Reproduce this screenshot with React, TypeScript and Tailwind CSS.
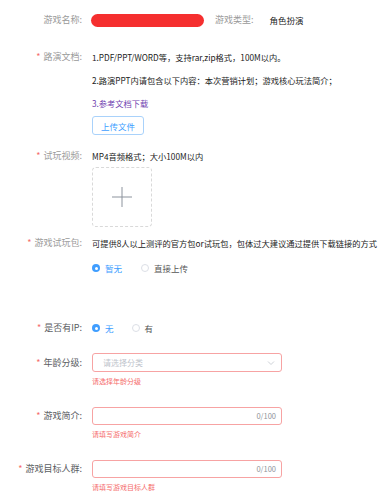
import React from "react";

const font = { fontFamily: '"Noto Sans CJK SC", "Noto Sans", sans-serif' };

function Label({ text, star, dark }: { text: string; star?: boolean; dark?: boolean }) {
  return (
    <div className={`w-[92px] shrink-0 pr-[10px] text-right text-[9px] leading-[14px] ${dark ? "text-[#5a5c61]" : "text-[#9a9a9a]"}`}>
      {star && <span className="mr-[3px] text-[#f56c6c]">*</span>}
      {text}
    </div>
  );
}

function Radio({ checked, label }: { checked?: boolean; label: string }) {
  return (
    <div className="flex items-center">
      {checked ? (
        <span className="flex h-[8px] w-[8px] items-center justify-center rounded-full bg-[#409eff]">
          <span className="h-[3px] w-[3px] rounded-full bg-white" />
        </span>
      ) : (
        <span className="h-[8px] w-[8px] rounded-full border border-[#dcdfe6] bg-white" />
      )}
      <span className={`ml-[5px] text-[8.5px] leading-[14px] ${checked ? "text-[#409eff]" : "text-[#555]"}`}>{label}</span>
    </div>
  );
}

export default function App() {
  return (
    <div className="h-[497px] w-[391px] overflow-hidden bg-white pt-[13px]" style={font}>
      {/* Row 1 */}
      <div className="flex items-center">
        <Label text="游戏名称:" />
        <div className="h-[13px] w-[113px] -ml-[1px] rounded-full bg-[#f52f2f]" />
        <div className="ml-[11px] text-[9px] leading-[14px] text-[#9a9a9a]">游戏类型:</div>
        <div className="ml-[16px] text-[8.5px] leading-[14px] text-[#222]">角色扮演</div>
      </div>

      {/* Row 2 */}
      <div className="mt-[23px] flex">
        <Label text="路演文档:" star />
        <div className="flex flex-col text-[8.25px] leading-[14px] text-[#222]">
          <div>1.PDF/PPT/WORD等，支持rar,zip格式，100M以内。</div>
          <div className="mt-[9px]">2.路演PPT内请包含以下内容：本次营销计划；游戏核心玩法简介；</div>
          <div className="mt-[9px] text-[#6f42b0]">3.参考文档下载</div>
          <div className="mt-[6px] flex h-[19px] w-[52px] items-center justify-center rounded-[3px] border border-[#a9d2fb] bg-white text-[8.5px] text-[#409eff]">
            上传文件
          </div>
        </div>
      </div>

      {/* Row 3 */}
      <div className="mt-[14px] flex">
        <Label text="试玩视频:" star />
        <div className="flex flex-col">
          <div className="text-[8.25px] leading-[14px] text-[#222]">MP4音频格式；大小100M以内</div>
          <div className="mt-[4px] flex h-[60px] w-[60px] items-center justify-center rounded-[4px] border border-dashed border-[#d9d9d9]">
            <svg width="20" height="20" viewBox="0 0 20 20">
              <path d="M10 0V20M0 10H20" stroke="#8c939d" strokeWidth="1" />
            </svg>
          </div>
        </div>
      </div>

      {/* Row 4 */}
      <div className="mt-[9px] flex">
        <Label text="游戏试玩包:" star />
        <div className="flex flex-col">
          <div className="whitespace-nowrap text-[8.25px] leading-[14px] text-[#222]">
            可提供8人以上测评的官方包or试玩包，包体过大建议通过提供下载链接的方式
          </div>
          <div className="mt-[11px] flex items-center">
            <Radio checked label="暂无" />
            <div className="ml-[19px]">
              <Radio label="直接上传" />
            </div>
          </div>
        </div>
      </div>

      {/* Row 5 */}
      <div className="mt-[46px] flex items-center">
        <Label text="是否有IP:" star dark />
        <Radio checked label="无" />
        <div className="ml-[18px]">
          <Radio label="有" />
        </div>
      </div>

      {/* Row 6 */}
      <div className="mt-[18px] flex">
        <div className="flex h-[19px] items-center">
          <Label text="年龄分级:" star dark />
        </div>
        <div className="flex flex-col">
          <div className="flex h-[19px] w-[190px] items-center justify-between rounded-[3px] border border-[#f7a3a3] pl-[10px] pr-[6px]">
            <span className="text-[8px] text-[#c0c4cc]">请选择分类</span>
            <svg width="8" height="8" viewBox="0 0 8 8">
              <path d="M1 2.5L4 5.5L7 2.5" stroke="#c0c4cc" strokeWidth="0.8" fill="none" />
            </svg>
          </div>
          <div className="mt-[2px] text-[7px] leading-[14px] text-[#f56c6c]">请选择年龄分级</div>
        </div>
      </div>

      {/* Row 7 */}
      <div className="mt-[19px] flex">
        <div className="flex h-[18px] items-center">
          <Label text="游戏简介:" star dark />
        </div>
        <div className="flex flex-col">
          <div className="flex h-[18px] w-[190px] items-center justify-end rounded-[3px] border border-[#f7a3a3] pr-[5px]">
            <span className="text-[7.5px] text-[#909399]">0/100</span>
          </div>
          <div className="mt-[2px] text-[7px] leading-[14px] text-[#f56c6c]">请填写游戏简介</div>
        </div>
      </div>

      {/* Row 8 */}
      <div className="mt-[19px] flex">
        <div className="flex h-[18px] items-center">
          <Label text="游戏目标人群:" star dark />
        </div>
        <div className="flex flex-col">
          <div className="flex h-[18px] w-[190px] items-center justify-end rounded-[3px] border border-[#f7a3a3] pr-[5px]">
            <span className="text-[7.5px] text-[#909399]">0/100</span>
          </div>
          <div className="mt-[2px] text-[7px] leading-[14px] text-[#f56c6c]">请填写游戏目标人群</div>
        </div>
      </div>
    </div>
  );
}
